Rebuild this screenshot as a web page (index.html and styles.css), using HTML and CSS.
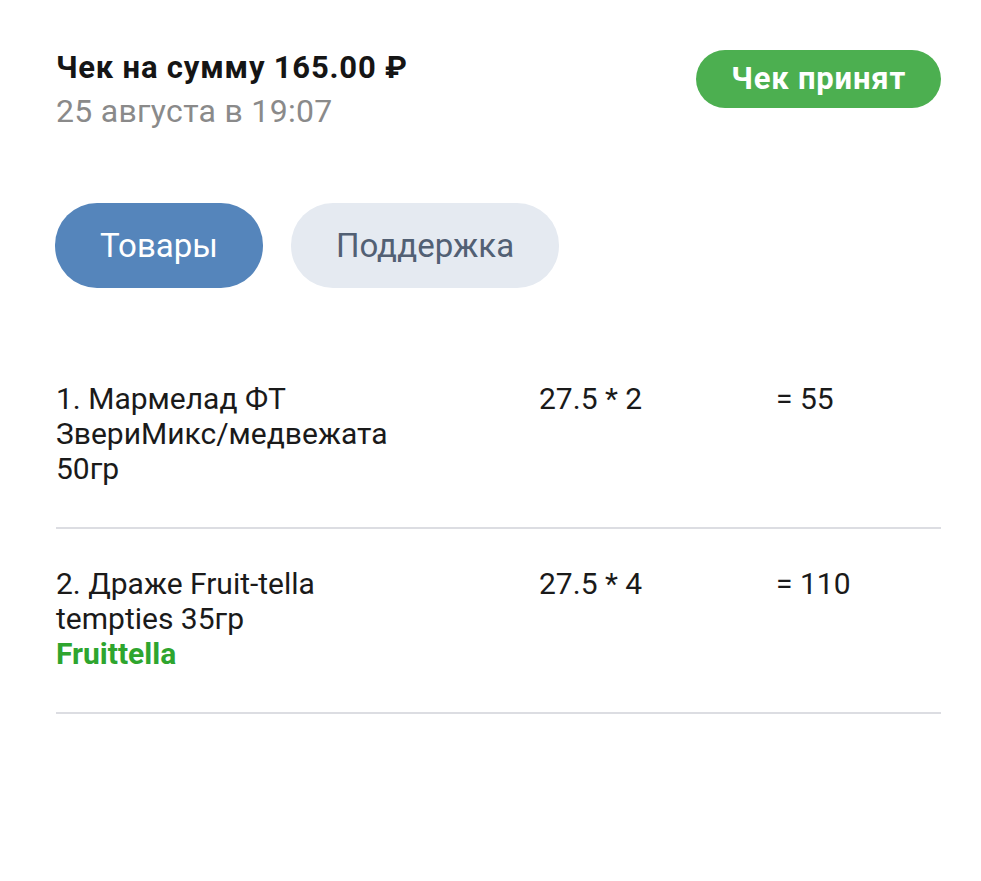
FILE: index.html
```html
<!DOCTYPE html>
<html lang="ru">
<head>
<meta charset="utf-8">
<title>Чек</title>
<link rel="stylesheet" href="styles.css">
</head>
<body>
<div class="page">
  <header class="head">
    <div class="head-text">
      <div class="title">Чек на сумму 165.00 ₽</div>
      <div class="date">25 августа в 19:07</div>
    </div>
    <div class="status">Чек принят</div>
  </header>
  <nav class="tabs">
    <div class="tab tab-active">Товары</div>
    <div class="tab">Поддержка</div>
  </nav>
  <div class="items">
    <div class="item">
      <div class="name">1. Мармелад ФТ ЗвериМикс/медвежата 50гр</div>
      <div class="calc">27.5 * 2</div>
      <div class="sum">= 55</div>
    </div>
    <div class="item">
      <div class="name">2. Драже Fruit-tella tempties 35гр<div class="brand">Fruittella</div></div>
      <div class="calc">27.5 * 4</div>
      <div class="sum">= 110</div>
    </div>
  </div>
</div>
</body>
</html>
```
FILE: styles.css
```css
* { box-sizing: border-box; }
html, body { margin: 0; padding: 0; background: #fff; }
body {
  font-family: Roboto, "Noto Sans", sans-serif;
  color: #151515;
  width: 981px;
}
.page {
  padding: 48px 40px 0 56px;
}
.head {
  display: flex;
  justify-content: space-between;
  align-items: flex-start;
}
.title {
  font-size: 31px;
  font-weight: 700;
  line-height: 40px;
  letter-spacing: 0.8px;
}
.date {
  font-size: 32px;
  color: #8a8a8a;
  line-height: 40px;
  margin-top: 3px;
  letter-spacing: 0.3px;
}
.status {
  margin-top: 2px;
  background: #4caf50;
  color: #fff;
  font-size: 31px;
  font-weight: 700;
  height: 58px;
  line-height: 58px;
  padding: 0 35px;
  border-radius: 29px;
  letter-spacing: 0.8px;
}
.tabs {
  display: flex;
  gap: 28px;
  margin-top: 72px;
  margin-left: -1px;
}
.tab {
  height: 85px;
  line-height: 85px;
  padding: 0 45px;
  border-radius: 42px;
  background: #e5eaf1;
  color: #526074;
  font-size: 33px;
}
.tab-active {
  background: #5585bb;
  color: #fff;
}
.items {
  margin-top: 56px;
}
.item {
  display: grid;
  grid-template-columns: 483px 237px 1fr;
  padding: 37px 0 41px;
  border-bottom: 2px solid #dcdde2;
  font-size: 30px;
  line-height: 35px;
  color: #1a1a1a;
}
.name {
  padding-right: 123px;
}
.brand {
  color: #2ea52e;
  font-weight: 700;
}
```
